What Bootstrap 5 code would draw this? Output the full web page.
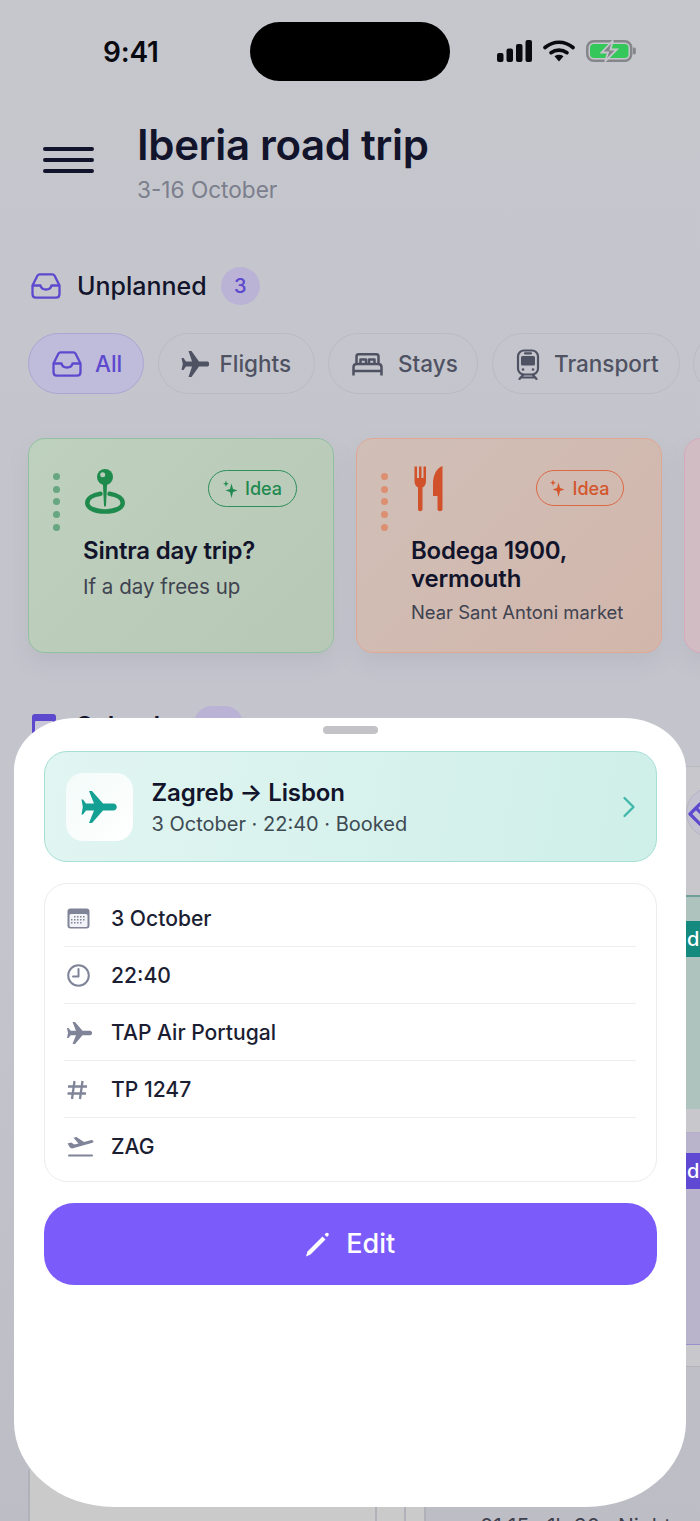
<!DOCTYPE html>
<html lang="en">
<head>
    <meta charset="UTF-8">
    <meta name="viewport" content="width=device-width, initial-scale=1.0">
    <title>Iberia road trip</title>
    <link rel="stylesheet" href="https://cdn.jsdelivr.net/npm/bootstrap@5.3.0/dist/css/bootstrap.min.css">
    <style>
        html, body { margin: 0; background: #c5c6cd; }
        body { font-family: "Inter", "Liberation Sans", sans-serif; color: #12142b; }
        .screen { position: relative; width: 700px; height: 1521px; overflow: hidden; background: linear-gradient(180deg, #c6c7cd 0%, #c3c4cc 60%, #bdbec5 100%); }

        .status-row { height: 104px; padding: 22px 0 0 103px; }
        .clock { width: 147px; font-size: 28px; font-weight: 600; line-height: 60px; color: #090a10; letter-spacing: -.2px; }
        .island { width: 200px; height: 59px; background: #000; border-radius: 30px; }
        .status-icons { margin-left: 47px; gap: 11px; height: 58px; }

        .trip-head { padding-left: 43px; height: 132px; }
        .menu-icon { width: 51px; margin-top: 43px; margin-right: 43px; flex: none; }
        .menu-icon span { display: block; height: 3.5px; border-radius: 2px; background: #12142b; margin-bottom: 7.5px; }
        .trip-title { font-size: 42px; font-weight: 600; line-height: 50px; letter-spacing: -.35px; margin: 16px 0 0; color: #12142b; }
        .trip-dates { font-size: 22.6px; line-height: 28px; color: #7b7e8c; margin-top: 6px; }

        .sect-row { padding-left: 31px; height: 40px; gap: 16px; margin-top: 30px; }
        .sect-name { font-size: 25px; font-weight: 500; color: #12142b; margin-top: 2px; }
        .sect-count { width: 39px; height: 38px; border-radius: 50%; background: #bab3d6; color: #5d49ce; font-size: 20px; font-weight: 500; margin-left: -2px; }

        .chip-row { padding-left: 28px; gap: 13.5px; margin-top: 27px; height: 62px; overflow: hidden; }
        .chip-pill { height: 61px; border: 1.5px solid #b9bac3; border-radius: 31px; padding: 1px 0 0 23px; font-size: 22.5px; font-weight: 500; color: #4f5262; flex: none; }
        .chip-pill.active { background: #bfbcdb; border-color: #aba5d3; color: #5d49ce; width: 116px; gap: 13px; }
        .chip-pill.flights { width: 157px; gap: 11px; padding-left: 22px; }
        .chip-pill.stays { width: 150px; gap: 15px; }
        .chip-pill.transport { width: 188px; gap: 14.5px; }
        .chip-pill.spare { width: 90px; }

        .idea-row { padding-left: 28px; gap: 22px; margin-top: 43px; height: 215px; }
        .idea-tile { width: 306px; height: 215px; flex: none; border-radius: 17px; position: relative; box-shadow: 0 10px 22px rgba(110,110,125,.12); }
        .idea-tile.green { background: linear-gradient(135deg, #bed0be, #b8c8b6); border: 1.5px solid #91c0a1; }
        .idea-tile.orange { background: linear-gradient(135deg, #d0bfb7, #d2b6ab); border: 1.5px solid #e0a794; }
        .idea-tile.pink { background: #d1bcc4; border: 1.5px solid #d9a9bb; }
        .grip { position: absolute; left: 24px; top: 34px; }
        .grip i { display: block; width: 7px; height: 7px; border-radius: 50%; margin-bottom: 5.7px; background: #67a681; }
        .orange .grip i { background: #dd8f72; }
        .tile-icon { position: absolute; left: 55px; top: 29px; }
        .orange .tile-icon { left: 57px; top: 27px; }
        .idea-tag { position: absolute; right: 36px; top: 31px; height: 37px; width: 89px; border-radius: 19px; border: 1.5px solid #2e8f5c; color: #1f8a50; font-size: 18px; font-weight: 500; gap: 7px; }
        .orange .idea-tag { border-color: #dc6844; color: #d4552c; top: 31px; width: 88px; height: 36px; right: 37px; }
        .tile-body { padding: 98px 20px 0 54px; }
        .tile-name { font-size: 24px; font-weight: 600; line-height: 28px; letter-spacing: -.2px; color: #12142b; }
        .tile-note { color: #3f4350; font-size: 20.5px; line-height: 28px; margin-top: 8px; }
        .orange .tile-note { font-size: 18.4px; margin-top: 5px; }

        .cal-row { padding-left: 32px; height: 40px; margin-top: 55px; gap: 19px; }
        .cal-mark { margin-top: 6px; flex: none; }
        .cal-name { font-size: 25px; font-weight: 600; color: #12142b; }
        .cal-count { width: 49px; height: 40px; border-radius: 18px; background: #bab3d6; margin-top: -2px; margin-left: -9px; }

        .far-column { position: absolute; left: 660px; top: 766px; width: 60px; height: 601px; background: #c8c8cc; border-top: 1px solid #b9bac0; border-bottom: 1px solid #b3b4bb; }
        .far-circle { position: absolute; left: 686px; top: 787px; width: 51px; height: 51px; border-radius: 50%; background: #c4c2d0; border: 1.5px solid #b5b4c2; }
        .far-glyph { position: absolute; left: 688px; top: 802px; }
        .far-panel { position: absolute; left: 660px; width: 60px; overflow: hidden; }
        .far-panel.teal { top: 895px; height: 214px; background: #aec3bd; border-top: 2px solid #6f9f98; }
        .far-panel.violet { top: 1132px; height: 213px; background: #b9b3cc; border-bottom: 1.5px solid #9a90cf; border-top: 1.5px solid #b3aecb; }
        .far-tag { position: absolute; left: 0; height: 36px; width: 60px; color: #fff; font-size: 20px; font-weight: 500; padding-left: 27px; line-height: 36px; }
        .teal .far-tag { background: #14897d; top: 24px; }
        .violet .far-tag { background: #6049d2; top: 20px; }
        .cell-fill { position: absolute; left: 28px; top: 1470px; width: 396px; height: 60px; background: #cacaca; }
        .col-line { position: absolute; top: 1470px; width: 1.5px; height: 60px; background: #b0b1b9; }
        .foot-note { position: absolute; left: 480px; top: 1515px; font-size: 21px; line-height: 24px; color: #3e404e; white-space: nowrap; }

        .sheet { position: absolute; left: 14px; top: 718px; width: 672px; height: 789px; background: #fff; border-radius: 62px 62px 100px 100px / 52px 52px 85px 85px; padding: 33px 29px 0 29.5px; }
        .grabber { position: absolute; left: 309px; top: 8px; width: 55px; height: 8px; border-radius: 4px; background: #c3c3c7; }
        .flight-tile { height: 111px; border-radius: 23px; border: 1.5px solid #a5dfd5; background: linear-gradient(100deg, #e1f5f1, #cfefe9); padding: 0 20px 0 21px; }
        .flight-icon { width: 67px; height: 68px; border-radius: 17px; background: linear-gradient(135deg, #f3fbf9, #fff); flex: none; margin-right: 19px; }
        .flight-text { padding-top: 3px; }
        .flight-name { font-size: 24px; font-weight: 600; line-height: 30px; letter-spacing: -.1px; color: #12142b; }
        .flight-sub { font-size: 20px; line-height: 28px; color: #3d4a52; margin-top: 2px; }

        .fact-box { margin-top: 21px; height: 299px; border: 1.5px solid #ececf0; border-radius: 23px; padding: 6px 20px 0 19px; }
        .fact-line { height: 57px; border-bottom: 1.5px solid #eeeef1; font-size: 21.1px; font-weight: 500; color: #1b1e33; padding-top: 1.5px; }
        .fact-line:last-child { border-bottom: 0; }
        .fact-ico { width: 47.5px; padding-left: 3.5px; flex: none; }

        .edit-btn.btn { display: flex; margin-top: 21px; width: 100%; height: 82px; border-radius: 30px; background: #7b5cfb; border: 0; color: #fff; font-size: 27px; font-weight: 500; gap: 16px; }
    </style>
</head>
<body>
    <div class="screen">
        <!-- status bar -->
        <div class="status-row d-flex align-items-start">
            <div class="clock">9:41</div>
            <div class="island"></div>
            <div class="status-icons d-flex align-items-center">
                <svg width="35" height="22" viewBox="0 0 35 22"><rect x="0" y="13" width="6.500" height="9" rx="2" fill="#090a10"/><rect x="9.500" y="8.500" width="6.500" height="13.500" rx="2" fill="#090a10"/><rect x="19" y="4" width="6.500" height="18" rx="2" fill="#090a10"/><rect x="28.500" y="0" width="6.500" height="22" rx="2" fill="#090a10"/></svg>
                <svg width="32" height="22" viewBox="0 0 32 22"><path d="M2 7.500C10.500 0.500 21.500 0.500 30 7.500" fill="none" stroke="#090a10" stroke-width="3.600" stroke-linecap="round"/><path d="M8 12.700C12.800 9.200 19.200 9.200 24 12.700" fill="none" stroke="#090a10" stroke-width="3.600" stroke-linecap="round"/><path d="M11.500 16.200L16 21.500L20.500 16.200C17.800 14.400 14.200 14.400 11.500 16.200Z" fill="#090a10"/></svg>
                <svg width="50" height="22" viewBox="0 0 50 22"><rect x="1.250" y="1.250" width="44" height="19.500" rx="6.500" fill="none" stroke="#85868a" stroke-width="2.500"/><rect x="4" y="4" width="38.500" height="14" rx="4" fill="#34c759"/><rect x="47" y="7.500" width="2.800" height="7" rx="1.400" fill="#85868a"/><path d="M27 0.500L15.500 12.500H22L19 21.500L31 9.500H24.500Z" fill="#85868a" stroke="#c5c6cd" stroke-width="1.800"/></svg>
            </div>
        </div>

        <!-- trip title -->
        <div class="trip-head d-flex align-items-start">
            <div class="menu-icon"><span></span><span></span><span></span></div>
            <div>
                <h1 class="trip-title">Iberia road trip</h1>
                <div class="trip-dates">3-16 October</div>
            </div>
        </div>

        <!-- unplanned -->
        <div class="sect-row d-flex align-items-center">
            <svg width="30" height="26" viewBox="0 0 30 26" fill="none" stroke="#5d49ce" stroke-width="2.300" stroke-linejoin="round"><path d="M1.500 12.500L6.500 2.500C7 1.700 7.700 1.300 8.500 1.300H21.500C22.300 1.300 23 1.700 23.500 2.500L28.500 12.500V21C28.500 23.200 27 24.700 25 24.700H5C3 24.700 1.500 23.200 1.500 21Z"/><path d="M1.500 12.500H9.500C10 15 12 16.500 15 16.500C18 16.500 20 15 20.500 12.500H28.500"/></svg>
            <span class="sect-name">Unplanned</span>
            <span class="sect-count d-flex align-items-center justify-content-center">3</span>
        </div>

        <div class="chip-row d-flex">
            <div class="chip-pill active d-flex align-items-center">
                <svg width="30" height="26" viewBox="0 0 30 26" fill="none" stroke="#5d49ce" stroke-width="2.300" stroke-linejoin="round"><path d="M1.500 12.500L6.500 2.500C7 1.700 7.700 1.300 8.500 1.300H21.500C22.300 1.300 23 1.700 23.500 2.500L28.500 12.500V21C28.500 23.200 27 24.700 25 24.700H5C3 24.700 1.500 23.200 1.500 21Z"/><path d="M1.500 12.500H9.500C10 15 12 16.500 15 16.500C18 16.500 20 15 20.500 12.500H28.500"/></svg>
                All
            </div>
            <div class="chip-pill flights d-flex align-items-center">
                <svg width="28" height="26" viewBox="0 0 28 26" fill="#4f5262"><path d="M26 10.500H18L10.500 0H7.500L11 10.500H5L2.500 7H0.500L1.800 13L0.500 19H2.500L5 15.500H11L7.500 26H10.500L18 15.500H26C29 15.500 29 10.500 26 10.500Z"/></svg>
                Flights
            </div>
            <div class="chip-pill stays d-flex align-items-center">
                <svg width="31" height="23" viewBox="0 0 31 23" fill="none" stroke="#4f5262" stroke-width="2.500" stroke-linejoin="round"><path d="M4.500 11V3.500C4.500 2.200 5.500 1.300 6.800 1.300H24.200C25.500 1.300 26.500 2.200 26.500 3.500V11"/><path d="M8.500 11V6.500H14V11M17 11V6.500H22.500V11"/><path d="M1.500 22.500V14C1.500 12 3 11 5 11H26C28 11 29.500 12 29.500 14V22.500"/><path d="M1.500 18H29.500"/></svg>
                Stays
            </div>
            <div class="chip-pill transport d-flex align-items-center">
                <svg width="24" height="31" viewBox="0 0 24 31" fill="none" stroke="#4f5262" stroke-width="2.200"><rect x="2" y="1.500" width="20" height="24" rx="6"/><rect x="5" y="7" width="14" height="9.500" rx="1.500" fill="#4f5262" stroke="none"/><path d="M9 4.300H15M7 26L3.500 30M17 26L20.500 30M4.500 28.500H19.500" stroke-linecap="round"/><circle cx="7" cy="20.500" r="1.300" fill="#4f5262" stroke="none"/><circle cx="17" cy="20.500" r="1.300" fill="#4f5262" stroke="none"/></svg>
                Transport
            </div>
            <div class="chip-pill spare"></div>
        </div>

        <!-- idea cards -->
        <div class="idea-row d-flex">
            <div class="idea-tile green">
                <div class="grip"><i></i><i></i><i></i><i></i><i></i></div>
                <svg class="tile-icon" width="42" height="46" viewBox="0 0 42 46" fill="none"><path d="M16.500 25.800C8.500 27 3.300 30.500 3.300 35C3.300 40 11 43.500 21 43.500C31 43.500 38.700 40 38.700 35C38.700 30.500 33.500 27 25.500 25.800" stroke="#1e8a4c" stroke-width="4.500" stroke-linecap="round"/><path d="M18.800 14H23.200L22 37.500C21.900 39 20.100 39 20 37.500Z" fill="#1e8a4c"/><circle cx="21" cy="9" r="8" fill="#1e8a4c"/><circle cx="18.700" cy="6.700" r="2.500" fill="#b9ccba"/></svg>
                <div class="idea-tag d-flex align-items-center justify-content-center">
                    <svg width="15" height="18" viewBox="0 0 15 18" fill="currentColor"><path d="M8.500 3.500L10 9L14.500 10.500L10 12L8.500 18L7 12L2.500 10.500L7 9Z"/><path d="M3 0.500L3.800 3L6 3.800L3.800 4.500L3 7L2.200 4.500L0 3.800L2.200 3Z"/></svg>
                    Idea
                </div>
                <div class="tile-body">
                    <div class="tile-name">Sintra day trip?</div>
                    <div class="tile-note">If a day frees up</div>
                </div>
            </div>
            <div class="idea-tile orange">
                <div class="grip"><i></i><i></i><i></i><i></i><i></i></div>
                <svg class="tile-icon" width="29" height="46" viewBox="0 0 29 46" fill="#d1512a"><path d="M0.500 0.500H3V12H5V0.500H7.500V12H9.500V0.500H12V15C12 18.500 10.500 20.500 8.500 21.500V43C8.500 46 4 46 4 43V21.500C2 20.500 0.500 18.500 0.500 15Z"/><path d="M28.500 0V43C28.500 46 23.500 46 23.500 43V30H19V18C19 9 22.500 2 28.500 0Z"/></svg>
                <div class="idea-tag d-flex align-items-center justify-content-center">
                    <svg width="15" height="18" viewBox="0 0 15 18" fill="currentColor"><path d="M8.500 3.500L10 9L14.500 10.500L10 12L8.500 18L7 12L2.500 10.500L7 9Z"/><path d="M3 0.500L3.800 3L6 3.800L3.800 4.500L3 7L2.200 4.500L0 3.800L2.200 3Z"/></svg>
                    Idea
                </div>
                <div class="tile-body">
                    <div class="tile-name">Bodega 1900, vermouth</div>
                    <div class="tile-note">Near Sant Antoni market</div>
                </div>
            </div>
            <div class="idea-tile pink"></div>
        </div>

        <!-- calendar, mostly hidden behind the sheet -->
        <div class="cal-row d-flex align-items-start">
            <svg class="cal-mark" width="24" height="26" viewBox="0 0 24 26"><rect width="24" height="26" rx="3" fill="#5d49ce"/><rect x="3" y="7" width="18" height="16" rx="1" fill="#c9c7d8"/></svg>
            <span class="cal-name">Calendar</span>
            <span class="cal-count"></span>
        </div>
        <div class="far-column"></div>
        <div class="far-circle"></div>
        <svg class="far-glyph" width="14" height="24" viewBox="0 0 14 24" fill="none" stroke="#5d49ce" stroke-width="3.200" stroke-linejoin="round"><path d="M2 12L12 2L24 14L14 24Z"/><path d="M8 6L20 18"/></svg>
        <div class="far-panel teal"><div class="far-tag">d</div></div>
        <div class="far-panel violet"><div class="far-tag">d</div></div>
        <div class="cell-fill"></div>
        <div class="col-line" style="left:28px"></div>
        <div class="col-line" style="left:375px"></div>
        <div class="col-line" style="left:404px"></div>
        <div class="col-line" style="left:424px"></div>
        <div class="foot-note">01:15 · 1h 30 · Night</div>

        <!-- bottom sheet -->
        <div class="sheet">
            <div class="grabber"></div>
            <div class="flight-tile d-flex align-items-center">
                <div class="flight-icon d-flex align-items-center justify-content-center">
                    <svg width="36" height="32" viewBox="0 0 36 32" fill="#14a093"><path d="M32 12.500H22L11 0H8L13 12.500H5L2 8.500H0.500L1.800 16L0.500 23.500H2L5 19.500H13L8 32H11L22 19.500H32C37 19.500 37 12.500 32 12.500Z"/></svg>
                </div>
                <div class="flex-grow-1 flight-text">
                    <div class="flight-name">Zagreb → Lisbon</div>
                    <div class="flight-sub">3 October · 22:40 · Booked</div>
                </div>
                <svg width="14" height="22" viewBox="0 0 14 22" fill="none" stroke="#3fb7aa" stroke-width="2.300" stroke-linecap="round" stroke-linejoin="round"><path d="M2.500 2L11.500 11L2.500 20"/></svg>
            </div>

            <div class="fact-box">
                <div class="fact-line d-flex align-items-center">
                    <div class="fact-ico d-flex align-items-center"><svg width="23" height="21" viewBox="0 0 23 21"><rect x="0.500" y="0.500" width="22" height="20" rx="3" fill="#7f8498"/><rect x="2.500" y="6" width="18" height="13" rx="1.500" fill="#f2f3f6"/><g fill="#7f8498"><rect x="7" y="8" width="1.500" height="1.500"/><rect x="10" y="8" width="1.500" height="1.500"/><rect x="13" y="8" width="1.500" height="1.500"/><rect x="16" y="8" width="1.500" height="1.500"/><rect x="4" y="11" width="1.500" height="1.500"/><rect x="7" y="11" width="1.500" height="1.500"/><rect x="10" y="11" width="1.500" height="1.500"/><rect x="13" y="11" width="1.500" height="1.500"/><rect x="16" y="11" width="1.500" height="1.500"/><rect x="4" y="14" width="1.500" height="1.500"/><rect x="7" y="14" width="1.500" height="1.500"/><rect x="10" y="14" width="1.500" height="1.500"/><rect x="13" y="14" width="1.500" height="1.500"/></g></svg></div>
                    3 October
                </div>
                <div class="fact-line d-flex align-items-center">
                    <div class="fact-ico d-flex align-items-center"><svg width="23" height="23" viewBox="0 0 23 23" fill="none" stroke="#7f8498" stroke-width="2"><circle cx="11.500" cy="11.500" r="10.300"/><path d="M11.500 5V12.500H6" stroke-linecap="round" stroke-linejoin="round"/></svg></div>
                    22:40
                </div>
                <div class="fact-line d-flex align-items-center">
                    <div class="fact-ico d-flex align-items-center"><svg width="25" height="22" viewBox="0 0 25 22" fill="#7f8498"><path d="M22.500 8.700H15.500L8 0H5.500L9 8.700H3.700L1.500 6H0L1 11L0 16H1.500L3.700 13.300H9L5.500 22H8L15.500 13.300H22.500C26 13.300 26 8.700 22.500 8.700Z"/></svg></div>
                    TAP Air Portugal
                </div>
                <div class="fact-line d-flex align-items-center">
                    <div class="fact-ico d-flex align-items-center"><svg width="22" height="20" viewBox="0 0 22 20" fill="none" stroke="#7f8498" stroke-width="2.300"><path d="M7.500 1L5 19M15.500 1L13 19M1 6.500H20M0.500 13.500H19"/></svg></div>
                    TP 1247
                </div>
                <div class="fact-line d-flex align-items-center">
                    <div class="fact-ico d-flex align-items-center"><svg width="27" height="20" viewBox="0 0 27 20" fill="#7f8498"><path d="M0.500 6.500L4 5.500L7.500 7.500L11.500 6.500L6.500 0.800L9.500 0L17 5L23.500 3.200C26 2.500 27.500 4.800 25.500 5.800L6 11.300C4.500 11.700 3.500 11 2.800 10.200Z"/><rect x="1" y="17.500" width="25" height="2" rx="1"/></svg></div>
                    ZAG
                </div>
            </div>

            <button class="btn edit-btn align-items-center justify-content-center">
                <svg width="25" height="26" viewBox="0 0 25 26" fill="#fff"><path d="M1 25.500L2.500 20.500L17.500 5.500L20.500 8.500L5.500 23.500Z"/><path d="M19.500 3.500L20.500 2.500C21.500 1.500 22.500 1.500 23.300 2.300C24 3 24 4 23 5L22 6Z"/></svg>
                Edit
            </button>
        </div>
    </div>

    <script src="https://cdn.jsdelivr.net/npm/bootstrap@5.3.0/dist/js/bootstrap.bundle.min.js"></script>
</body>
</html>
